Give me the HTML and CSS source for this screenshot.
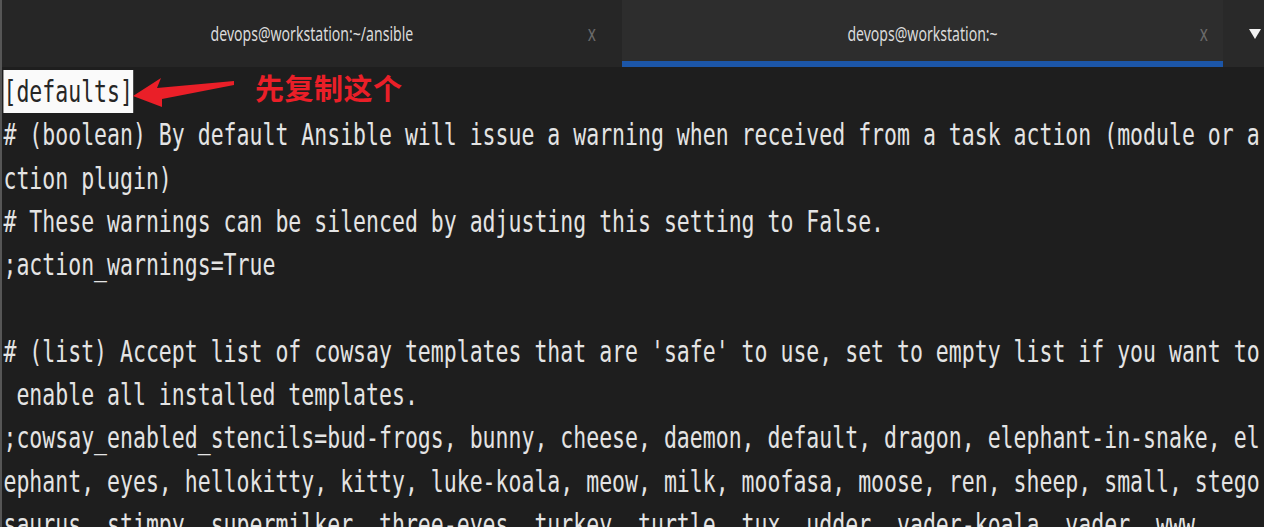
FILE: index.html
```html
<!DOCTYPE html>
<html lang="en">

<head>
    <meta charset="UTF-8">
    <meta name="viewport" content="width=device-width, initial-scale=1.0">
    <title>ansible.cfg</title>
    <link rel="stylesheet" href="styles.css">
</head>

<body>
    <div class="window">
        <header class="tabbar">
            <div class="tab">
                <span class="tab-title">devops@workstation:~/ansible</span>
                <span class="tab-close">x</span>
            </div>
            <div class="tab tab-active">
                <span class="tab-title">devops@workstation:~</span>
                <span class="tab-close">x</span>
            </div>
            <div class="tab-menu">
                <svg width="12" height="10" viewBox="0 0 12 10"><polygon points="0,0 12,0 6,10" fill="#f2f2f2"/></svg>
            </div>
        </header>

        <main class="terminal">
            <div class="screen">
                <div class="line"><span class="hl">[defaults]</span></div>
                <div class="line"># (boolean) By default Ansible will issue a warning when received from a task action (module or a</div>
                <div class="line">ction plugin)</div>
                <div class="line"># These warnings can be silenced by adjusting this setting to False.</div>
                <div class="line">;action_warnings=True</div>
                <div class="line"> </div>
                <div class="line"># (list) Accept list of cowsay templates that are 'safe' to use, set to empty list if you want to</div>
                <div class="line"> enable all installed templates.</div>
                <div class="line">;cowsay_enabled_stencils=bud-frogs, bunny, cheese, daemon, default, dragon, elephant-in-snake, el</div>
                <div class="line">ephant, eyes, hellokitty, kitty, luke-koala, meow, milk, moofasa, moose, ren, sheep, small, stego</div>
                <div class="line">saurus, stimpy, supermilker, three-eyes, turkey, turtle, tux, udder, vader-koala, vader, www</div>
            </div>

            <!-- red annotation drawn over the screenshot -->
            <div class="note">
                <svg class="note-arrow" width="104" height="34" viewBox="0 0 104 34">
                    <polygon points="0,19 28,1 24,11 101,4 101,8 29,22 29,30" fill="#ea1f28"/>
                </svg>
                <span class="note-text">先复制这个</span>
            </div>
        </main>
    </div>
</body>

</html>
```

FILE: styles.css
```css
html,
body {
    margin: 0;
    height: 100%;
    background: #1e1e1e;
    overflow: hidden;
}

.window {
    height: 100%;
    border-left: 2px solid #565656;
    display: flex;
    flex-direction: column;
}

.tabbar {
    flex-shrink: 0;
    display: grid;
    grid-template-columns: 620px 601px 1fr;
    height: 67px;
    background: #262626;
    font-family: "Noto Sans", "Open Sans", sans-serif;
}

.tab {
    display: grid;
    grid-template-columns: 1fr auto 1fr;
    align-items: center;
    padding: 0 24px;
    background: #262626;
}

.tab-title {
    grid-column: 2;
    display: inline-block;
    font-size: 19px;
    color: #dadada;
    transform: scaleX(0.74);
    white-space: nowrap;
    padding-top: 1px;
}

.tab-close {
    grid-column: 3;
    justify-self: end;
    display: inline-block;
    font-size: 22px;
    color: #6a6a6a;
    transform: scaleX(0.7);
    margin-top: -3px;
}

.tab-active {
    background: #2d2d2d;
    box-shadow: inset 0 -6px 0 #1c56a8;
    padding: 0 13px;
}

.tab-menu {
    display: flex;
    align-items: center;
    justify-content: flex-end;
    padding-right: 3px;
    background: #292929;
}

.terminal {
    flex: 1;
    position: relative;
    overflow: hidden;
    padding-top: 3px;
}

.screen {
    width: 1760px;
    transform: scaleX(0.717);
    transform-origin: left top;
    font-family: "DejaVu Sans Mono", monospace;
    font-size: 30px;
    line-height: 43.3px;
    color: #e4e4e4;
    padding-left: 2px;
}

.line {
    white-space: pre;
    height: 43.3px;
}

.hl {
    display: inline-block;
    background: #fafafa;
    color: #262626;
}

.note {
    position: absolute;
    left: 131px;
    top: 3px;
    display: flex;
    align-items: flex-start;
    gap: 18px;
}

.note-arrow {
    margin-top: 7px;
}

.note-text {
    font-family: "Noto Sans CJK SC", sans-serif;
    font-weight: 700;
    font-size: 29px;
    line-height: 36px;
    color: #ea1f28;
    letter-spacing: 0.5px;
    margin-top: -1px;
}
```
